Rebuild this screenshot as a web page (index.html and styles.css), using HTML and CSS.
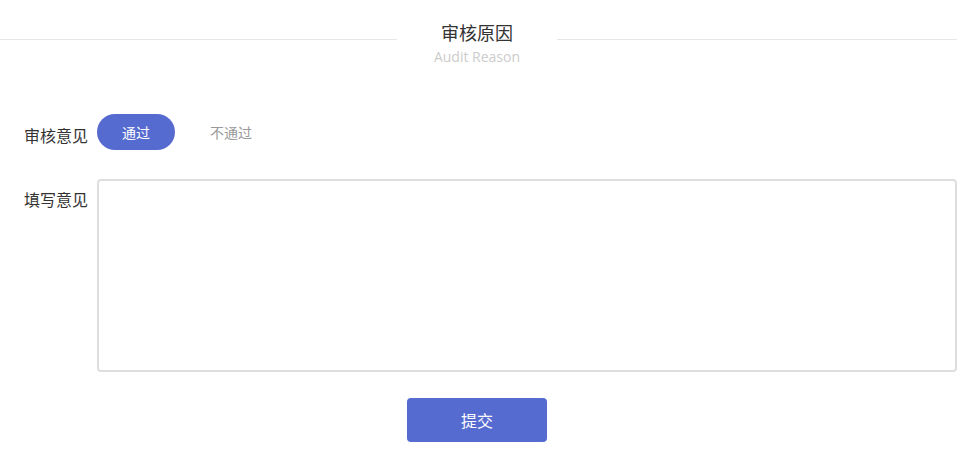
FILE: index.html
```html
<!DOCTYPE html>
<html>
  <head>
    <title>审核原因</title>
    <link rel="stylesheet" href="styles.css">
  </head>
  <body>
    <div class="container">
      <div class="header">
        <div class="header-line line-left"></div>
        <div class="header-title">
          <div class="title-cn">审核原因</div>
          <div class="title-en">Audit Reason</div>
        </div>
        <div class="header-line"></div>
      </div>

      <div class="form-row row-opinion">
        <div class="label">审核意见</div>
        <div class="options">
          <button class="option active">通过</button>
          <button class="option">不通过</button>
        </div>
      </div>

      <div class="form-row row-remark">
        <div class="label label-remark">填写意见</div>
        <textarea class="remark"></textarea>
      </div>

      <div class="actions">
        <button class="submit-button">提交</button>
      </div>
    </div>
  </body>
</html>
```

FILE: styles.css
```css
body {
  font-family: "Noto Sans CJK SC", "Noto Sans", sans-serif;
  background-color: #fff;
  color: #333;
  margin: 0;
  padding: 0;
}
.container {
  width: 957px;
}
.header {
  display: flex;
}
.header-line {
  flex: 1;
  height: 1px;
  margin-top: 39px;
  background-color: #e6e6e6;
}
.header-line.line-left {
  flex: 0 0 397px;
}
.header-title {
  width: 160px;
  padding-top: 21px;
  text-align: center;
}
.title-cn {
  font-size: 18px;
  line-height: 22px;
  color: #333;
}
.title-en {
  margin-top: 4px;
  font-family: "Open Sans", "Noto Sans", sans-serif;
  font-size: 14px;
  line-height: 20px;
  color: #ccc;
}
.form-row {
  display: flex;
  align-items: flex-start;
}
.row-opinion {
  margin-top: 47px;
}
.row-remark {
  margin-top: 29px;
}
.label {
  width: 73px;
  padding-left: 24px;
  padding-top: 9px;
  font-size: 16px;
  line-height: 24px;
  color: #333;
  flex-shrink: 0;
}
.label-remark {
  padding-top: 8px;
}
.options {
  display: flex;
}
.option {
  width: 78px;
  height: 36px;
  padding: 0;
  border: none;
  border-radius: 18px;
  background-color: transparent;
  font-family: inherit;
  font-size: 14px;
  color: #999;
  cursor: pointer;
}
.option + .option {
  margin-left: 17px;
}
.option.active {
  background-color: #566bd0;
  color: #fff;
}
.remark {
  box-sizing: border-box;
  width: 860px;
  height: 193px;
  margin: 0;
  padding: 8px;
  border: 2px solid #dedede;
  border-radius: 4px;
  resize: none;
  font-family: inherit;
  font-size: 14px;
  outline: none;
}
.actions {
  display: flex;
  justify-content: center;
  margin-top: 26px;
  padding-right: 3px;
}
.submit-button {
  width: 140px;
  height: 44px;
  border: none;
  border-radius: 4px;
  background-color: #566bd0;
  color: #fff;
  font-family: inherit;
  font-size: 16px;
  cursor: pointer;
}
```
